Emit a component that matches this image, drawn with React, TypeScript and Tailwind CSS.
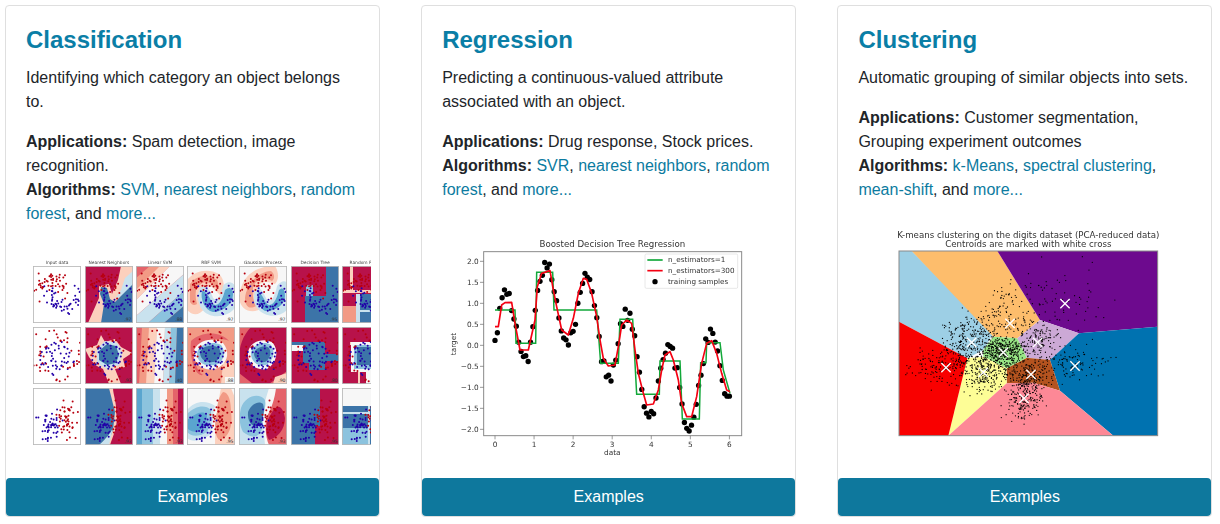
import React from "react";

// small seeded generator so the scatter plots stay the same on every load
const makeRandom = (seed: number) => () => {
  seed = (seed * 1664525 + 1013904223) % 4294967296;
  return seed / 4294967296;
};
const makeGauss = (rand: () => number) => () =>
  (rand() + rand() + rand() + rand() - 2) * 1.7;

const CRIMSON = "#b8124a";
const RED = "#e4636a";
const SALMON = "#f29a85";
const PINK = "#fcd0bd";
const WHITE = "#f7f7f7";
const PALE = "#c9e2ee";
const SKY = "#8cc3de";
const MID = "#5aa5cf";
const BLUE = "#3c74a8";

type Shape = [string, string];
type Panel = { bg: string; score?: string; shapes: Shape[] };

const rows: Panel[][] = [
  [
    { bg: "#ffffff", shapes: [] },
    {
      bg: CRIMSON,
      score: ".97",
      shapes: [
        [PINK, "M3,57 L14,32 L14,20 L24,18 L27,28 L33,14 L36,0 L48,0 L48,57Z"],
        [PALE, "M48,5 L40,12 L36,24 L30,33 L48,24Z"],
        [
          BLUE,
          "M48,18 L38,28 L30,36 L25,33 L22,22 L16,21 L15,28 L19,38 L16,57 L48,57Z",
        ],
      ],
    },
    {
      bg: RED,
      score: ".88",
      shapes: [
        [SALMON, "M14,0 L0,12 L0,30 L30,0Z"],
        [PINK, "M24,0 L0,24 L0,34 L34,0Z"],
        [WHITE, "M34,0 L0,34 L0,50 L48,8 L48,0Z"],
        [PALE, "M48,8 L0,50 L0,57 L12,57 L48,25Z"],
        [SKY, "M48,25 L12,57 L28,57 L48,40Z"],
        [BLUE, "M48,40 L28,57 L48,57Z"],
      ],
    },
    {
      bg: WHITE,
      score: ".97",
      shapes: [
        [
          PINK,
          "M0,44 L0,14 C8,4 22,2 32,8 C38,14 38,22 34,30 L28,24 C24,18 18,18 13,24 C10,30 12,36 18,42 C12,50 6,50 0,44Z",
        ],
        [
          SALMON,
          "M3,36 L3,18 C10,8 22,8 30,14 C32,18 31,22 30,23 C24,14 14,14 9,24 C8,30 9,34 10,38 C7,40 5,39 3,36Z",
        ],
        [
          PALE,
          "M13,22 C18,18 24,24 26,32 C30,36 34,30 36,20 C40,14 46,16 48,20 L48,42 C40,52 22,54 14,42 C10,34 10,28 13,22Z",
        ],
        [
          MID,
          "M15,25 C19,24 23,32 26,38 C32,42 36,32 38,24 C42,20 46,22 46,28 C46,38 36,46 26,46 C18,44 13,34 15,25Z",
        ],
      ],
    },
    {
      bg: WHITE,
      score: ".97",
      shapes: [
        [
          PINK,
          "M0,32 C2,10 16,0 36,0 C40,6 40,14 36,18 C28,14 20,16 18,22 C16,30 20,36 24,42 C14,48 2,46 0,32Z",
        ],
        [
          SALMON,
          "M6,32 C8,18 18,6 32,5 C36,8 36,13 33,15 C24,10 16,14 14,22 C13,30 15,36 17,40 C10,44 6,40 6,32Z",
        ],
        [
          PALE,
          "M17,24 C22,20 24,26 28,34 C32,38 36,30 38,20 C42,14 48,14 48,18 L48,44 C40,52 26,52 18,42 C14,36 14,28 17,24Z",
        ],
        [
          MID,
          "M19,26 C22,26 24,32 28,38 C34,42 38,32 40,24 C44,20 46,24 46,30 C46,40 34,46 26,45 C20,42 17,32 19,26Z",
        ],
      ],
    },
    {
      bg: CRIMSON,
      score: ".95",
      shapes: [
        [BLUE, "M35,0 H48 V57 H14 V30 H35Z"],
        [SKY, "M15,19 H22 V30 H15Z"],
      ],
    },
    {
      bg: CRIMSON,
      shapes: [
        [SALMON, "M0,40 H14 V57 H0Z"],
        [PINK, "M0,24 H48 V27 H0Z M8,0 H11 V24 H8Z"],
        [BLUE, "M16,28 H48 V57 H16Z"],
        [PALE, "M14,28 H18 V57 H14Z M16,44 H30 V46 H16Z"],
      ],
    },
  ],
  [
    { bg: "#ffffff", shapes: [] },
    {
      bg: CRIMSON,
      score: ".93",
      shapes: [
        [
          PINK,
          "M0,22 L12,18 L16,8 L20,15 L30,12 L36,20 L47,26 L38,32 L40,40 L30,42 L36,57 L24,57 L18,42 L10,38 L4,30Z",
        ],
        [PALE, "M12,22 L20,14 L32,16 L37,26 L34,38 L22,42 L12,36Z"],
        [BLUE, "M14,24 L22,17 L31,19 L34,28 L31,36 L22,38 L14,33Z"],
      ],
    },
    {
      bg: SALMON,
      score: ".40",
      shapes: [
        [RED, "M0,0 H6 L3,57 H0Z"],
        [PINK, "M13,0 H21 L18,57 H10Z"],
        [WHITE, "M21,0 H29 L27,57 H18Z"],
        [PALE, "M29,0 H35 L33,57 H27Z"],
        [SKY, "M35,0 H41 L39,57 H33Z"],
        [BLUE, "M41,0 H48 V57 H39Z"],
      ],
    },
    {
      bg: SALMON,
      score: ".88",
      shapes: [
        [RED, "M4,14 C14,4 34,4 42,14 C34,10 14,12 8,22 C6,34 10,44 16,48 C8,50 2,30 4,14Z"],
        [PINK, "M36,36 C42,34 48,36 48,40 V57 H34Z"],
        [WHITE, "M6,26 C10,12 26,10 36,16 C44,26 40,38 28,42 C18,44 8,40 6,26Z"],
        [
          SKY,
          "M10,26 C12,16 26,14 34,18 C40,26 36,36 28,38 C18,40 10,36 10,26Z",
        ],
        [BLUE, "M13,25 C16,18 26,17 32,21 C35,27 33,33 27,35 C18,36 13,32 13,25Z"],
        [WHITE, "M38,50 H48 V57 H38Z"],
      ],
    },
    {
      bg: CRIMSON,
      score: ".90",
      shapes: [
        [RED, "M0,0 H12 C4,8 0,20 0,30Z M0,46 L14,57 H0Z M30,57 L48,44 V57Z"],
        [PINK, "M36,50 L48,46 V57 H34Z"],
        [WHITE, "M9,26 C10,14 26,10 34,16 C40,24 38,36 28,42 C18,44 8,38 9,26Z"],
        [SKY, "M12,26 C14,16 26,14 32,18 C37,25 34,34 27,38 C20,40 12,36 12,26Z"],
        [BLUE, "M15,26 C17,20 26,18 30,21 C33,26 31,32 26,35 C20,36 15,32 15,26Z"],
      ],
    },
    {
      bg: CRIMSON,
      score: ".80",
      shapes: [
        [BLUE, "M12,15 H34 V43 H18 V36 H12Z M34,27 H48 V34 H34Z M0,15 H12 V18 H0Z"],
        [WHITE, "M0,18 H12 V24 H0Z"],
      ],
    },
    {
      bg: CRIMSON,
      shapes: [
        [PINK, "M8,15 H48 V18 H8Z M16,40 V57 H18 V40Z"],
        [WHITE, "M9,15 H48 V57 H24 V45 H9Z"],
        [SKY, "M12,18 H48 V42 H12Z"],
        [BLUE, "M15,20 H48 V38 H15Z"],
      ],
    },
  ],
  [
    { bg: "#ffffff", shapes: [] },
    {
      bg: BLUE,
      score: ".93",
      shapes: [
        [
          PINK,
          "M24,0 H48 V57 H22 L28,42 L30,24 Z",
        ],
        [PALE, "M14,57 C22,50 26,44 28,40 L24,57Z"],
        [CRIMSON, "M28,0 H48 V57 H25 C28,48 34,36 31,24 C32,16 28,6 28,0Z"],
      ],
    },
    {
      bg: MID,
      score: ".93",
      shapes: [
        [SKY, "M6,0 H17 V57 H6Z"],
        [PALE, "M17,0 H24 V57 H17Z"],
        [WHITE, "M24,0 H31 V57 H24Z"],
        [SALMON, "M31,0 H37 V57 H31Z"],
        [RED, "M37,0 H42 V57 H37Z"],
        [CRIMSON, "M42,0 H48 V57 H42Z"],
      ],
    },
    {
      bg: WHITE,
      score: ".95",
      shapes: [
        [PINK, "M34,0 H44 L48,10 V57 H28 C28,40 30,18 34,0Z"],
        [SALMON, "M36,4 C42,4 44,14 44,24 C46,38 42,50 32,52 C26,46 28,30 30,24 C30,16 32,8 36,4Z"],
        [PALE, "M0,22 C8,12 20,12 28,18 C26,24 26,34 24,46 C14,54 4,54 0,50Z"],
        [SKY, "M0,26 C8,18 18,16 24,22 C24,32 22,40 20,44 C10,50 4,48 0,44Z"],
        [MID, "M0,32 C8,26 14,22 20,26 C20,34 18,38 14,42 C6,46 2,42 0,40Z"],
      ],
    },
    {
      bg: WHITE,
      score: ".93",
      shapes: [
        [PALE, "M0,0 H30 C26,14 22,24 24,36 L26,57 H0Z"],
        [SKY, "M2,20 C6,8 20,4 26,12 C28,20 22,28 24,38 C20,52 12,50 4,44 C0,36 0,28 2,20Z"],
        [BLUE, "M9,24 C12,16 20,12 24,16 C26,22 24,30 22,36 C16,42 8,36 9,24Z"],
        [RED, "M37,0 H48 V57 H30 C26,48 26,36 28,28 C32,22 36,10 37,0Z"],
        [CRIMSON, "M32,26 C38,14 44,18 46,30 C46,42 38,50 30,52 C26,46 26,34 32,26Z"],
      ],
    },
    {
      bg: BLUE,
      score: ".95",
      shapes: [[CRIMSON, "M29,0 H48 V57 H24 V38 H29Z"]],
    },
    {
      bg: BLUE,
      shapes: [
        [WHITE, "M0,0 H48 V18 H0Z"],
        [SKY, "M0,40 H26 V57 H0Z"],
        [PALE, "M0,24 H28 V26 H0Z M26,18 H28 V57 H26Z"],
      ],
    },
  ],
];

const TITLES = [
  "Input data",
  "Nearest Neighbors",
  "Linear SVM",
  "RBF SVM",
  "Gaussian Process",
  "Decision Tree",
  "Random Forest",
];
const COLUMN_X = [33, 85, 136, 187, 239, 291, 342];
const ROW_Y = [266, 327, 388];

// one scatter per row: moons, circles, linearly separable blobs
const makeDots = () => {
  const rand = makeRandom(41);
  const gauss = makeGauss(rand);
  const moons: [number, number, number][] = [];
  const circles: [number, number, number][] = [];
  const blobs: [number, number, number][] = [];
  for (let i = 0; i < 100; i++) {
    const c = i % 2;
    const t = rand() * Math.PI;
    const mx = c ? 1 - Math.cos(t) : Math.cos(t);
    const my = c ? 0.5 - Math.sin(t) : Math.sin(t);
    moons.push([(mx + 1.25) * 14 + gauss() * 3.5, 32 - my * 21 + gauss() * 4, c]);
    const a = rand() * Math.PI * 2;
    const r = c ? 10 : 19;
    circles.push([
      23 + Math.cos(a) * r + gauss() * 4,
      29 + Math.sin(a) * r * 1.1 + gauss() * 4,
      c,
    ]);
    blobs.push(
      c
        ? [17 + gauss() * 6, 38 + gauss() * 7, 1]
        : [33 + gauss() * 5, 33 + gauss() * 10, 0],
    );
  }
  return [moons, circles, blobs];
};
const dots = makeDots();

const ClassifierGrid = () => (
  <svg
    width={341}
    height={192}
    viewBox="30 258 341 192"
    className="block ml-[24px] mt-[32px] blur-[0.5px] font-['DejaVu_Sans',sans-serif]"
  >
    {TITLES.map((title, c) => (
      <text
        key={title}
        x={COLUMN_X[c] + 24}
        y={264}
        fontSize={4.4}
        fill="#444"
        textAnchor="middle"
      >
        {title}
      </text>
    ))}
    {rows.map((row, r) =>
      row.map((panel, c) => (
        <svg
          key={`${r}-${c}`}
          x={COLUMN_X[c]}
          y={ROW_Y[r]}
          width={48}
          height={57}
          viewBox="0 0 48 57"
        >
          <rect width={48} height={57} fill={panel.bg} />
          {panel.shapes.map(([fill, d], i) => (
            <path key={i} d={d} fill={fill} />
          ))}
          {dots[r].map(([x, y, k], i) => (
            <circle
              key={i}
              cx={x}
              cy={y}
              r={1}
              fill={k ? "#2200a8" : "#b8000f"}
            />
          ))}
          {panel.score && (
            <text x={46.5} y={54.5} fontSize={4.6} fill="#333" textAnchor="end">
              {panel.score}
            </text>
          )}
          <rect
            x={0.4}
            y={0.4}
            width={47.2}
            height={56.2}
            fill="none"
            stroke="#b9b9b9"
            strokeWidth={0.9}
          />
        </svg>
      )),
    )}
  </svg>
);

const RED_LINE =
  "165,290 175,290 185,225 195,218 215,217 225,280 240,360 265,360 285,270 292,170 305,130 330,122 340,180 350,230 365,300 385,315 400,265 415,190 430,145 440,148 455,190 470,260 480,330 490,385 505,408 525,405 535,350 545,285 560,270 575,280 585,360 595,430 610,490 620,525 640,522 655,480 665,420 675,375 690,365 700,390 715,450 725,520 740,560 755,560 770,500 785,400 800,340 815,332 830,370 845,430 860,480 870,485";
const GREEN_LINE =
  "165,240 225,240 228,340 287,340 290,127 338,127 342,240 470,240 482,400 535,400 540,268 578,268 590,493 658,493 660,393 720,393 727,567 778,567 782,398 798,398 800,338 840,338 850,420 870,490";

const makeSamples = () => {
  const rand = makeRandom(7);
  const gauss = makeGauss(rand);
  const points: [number, number][] = [];
  for (let i = 0; i < 100; i++) {
    const x = (i * 6) / 99;
    const y = Math.sin(x) + Math.sin(6 * x) + gauss() * 0.1;
    points.push([165 + x * 117.2, 346 - y * 126]);
  }
  return points;
};
const samples = makeSamples();

const RegressionChart = () => (
  <svg
    width={310}
    height={235}
    viewBox="0 0 930 705"
    className="block ml-[18px] mt-[28px] blur-[0.4px] font-['DejaVu_Sans',sans-serif]"
  >
    <text x={517} y={50} fontSize={26} fill="#333" textAnchor="middle">
      Boosted Decision Tree Regression
    </text>
    <rect
      x={131}
      y={65}
      width={774}
      height={552}
      fill="#fff"
      stroke="#8a8a8a"
      strokeWidth={3}
    />
    {[2, 1.5, 1, 0.5, 0, -0.5, -1, -1.5, -2].map((v) => {
      const y = 346 - v * 126;
      return (
        <g key={v}>
          <line x1={120} x2={131} y1={y} y2={y} stroke="#666" strokeWidth={2} />
          <text x={116} y={y + 7} fontSize={22} fill="#333" textAnchor="end">
            {v < 0 ? `\u2212${(-v).toFixed(1)}` : v.toFixed(1)}
          </text>
        </g>
      );
    })}
    {[0, 1, 2, 3, 4, 5, 6].map((v) => {
      const x = 165 + v * 117.2;
      return (
        <g key={v}>
          <line x1={x} x2={x} y1={617} y2={628} stroke="#666" strokeWidth={2} />
          <text x={x} y={650} fontSize={22} fill="#333" textAnchor="middle">
            {v}
          </text>
        </g>
      );
    })}
    <text x={517} y={676} fontSize={22} fill="#333" textAnchor="middle">
      data
    </text>
    <text
      transform="translate(47 342) rotate(-90)"
      fontSize={22}
      fill="#333"
      textAnchor="middle"
    >
      target
    </text>
    {samples.map(([x, y], i) => (
      <circle key={i} cx={x} cy={y} r={8} fill="#000" />
    ))}
    <polyline
      points={GREEN_LINE}
      fill="none"
      stroke="#12a83a"
      strokeWidth={4.5}
    />
    <polyline
      points={RED_LINE}
      fill="none"
      stroke="#f40012"
      strokeWidth={5}
      strokeLinejoin="round"
    />
    <rect
      x={615}
      y={72}
      width={278}
      height={103}
      rx={4}
      fill="#fff"
      fillOpacity={0.85}
      stroke="#ddd"
      strokeWidth={2}
    />
    <line x1={622} x2={668} y1={90} y2={90} stroke="#12a83a" strokeWidth={5} />
    <line x1={622} x2={668} y1={122} y2={122} stroke="#f40012" strokeWidth={5} />
    <circle cx={645} cy={155} r={8} fill="#000" />
    <text x={684} y={97} fontSize={21.7} fill="#333">
      n_estimators=1
    </text>
    <text x={684} y={129} fontSize={21.7} fill="#333">
      n_estimators=300
    </text>
    <text x={684} y={161} fontSize={21.7} fill="#333">
      training samples
    </text>
  </svg>
);

const REGIONS: [string, string][] = [
  ["#9dcfe5", "57,78 95,78 340,325 310,375 262,400 57,290"],
  ["#fdbd6c", "95,78 352,78 480,285 412,340 340,335"],
  ["#6d0a8e", "352,78 833,78 833,305 597,325 480,285"],
  ["#cca9d6", "480,285 597,325 510,405 440,398 412,340"],
  ["#0072b0", "597,325 833,305 833,632 700,632 540,497 510,405"],
  ["#b4531f", "440,398 510,405 540,497 460,473 380,475 380,430"],
  ["#98e585", "340,335 412,340 440,398 380,430 310,395 310,375"],
  ["#fdfd96", "262,400 310,395 380,430 380,475 205,632"],
  ["#f90000", "57,290 262,400 205,632 57,632"],
  ["#fd8896", "380,475 460,473 540,497 700,632 205,632"],
];

// centre and spread of the point cloud of each cluster, then its white cross
const CLUSTERS: [number, number, number, number, number, number, number][] = [
  [555, 220, 75, 65, 60, 555, 236],
  [385, 280, 50, 48, 140, 390, 295],
  [473, 350, 36, 28, 150, 473, 352],
  [275, 345, 50, 34, 260, 275, 352],
  [368, 382, 32, 22, 320, 370, 382],
  [198, 420, 55, 28, 160, 198, 428],
  [315, 440, 38, 30, 260, 310, 442],
  [585, 420, 50, 28, 100, 585, 423],
  [453, 450, 32, 24, 170, 453, 448],
  [432, 520, 28, 32, 190, 432, 520],
];

const makeSpecks = () => {
  const rand = makeRandom(1234);
  const gauss = makeGauss(rand);
  const specks: [number, number][] = [];
  CLUSTERS.forEach(([cx, cy, sx, sy, n]) => {
    for (let i = 0; i < n; i++) {
      const x = cx + gauss() * sx;
      const y = cy + gauss() * sy;
      if (x > 70 && x < 820 && y > 90 && y < 620) specks.push([x, y]);
    }
  });
  return specks;
};
const specks = makeSpecks();

const ClusterChart = () => (
  <svg
    width={295}
    height={220}
    viewBox="0 0 885 660"
    className="block ml-[42px] mt-[23px] blur-[0.4px] font-['DejaVu_Sans',sans-serif]"
  >
    <text x={445} y={39} fontSize={26} fill="#333" textAnchor="middle">
      K-means clustering on the digits dataset (PCA-reduced data)
    </text>
    <text x={445} y={66} fontSize={26} fill="#333" textAnchor="middle">
      Centroids are marked with white cross
    </text>
    {REGIONS.map(([fill, points]) => (
      <polygon key={fill} points={points} fill={fill} />
    ))}
    {specks.map(([x, y], i) => (
      <circle key={i} cx={x} cy={y} r={1.9} fill="#000" />
    ))}
    {CLUSTERS.map(([, , , , , a, b], i) => (
      <path
        key={i}
        d={`M${a - 14},${b - 14} L${a + 14},${b + 14} M${a - 14},${b + 14} L${a + 14},${b - 14}`}
        stroke="#fff"
        strokeWidth={4}
      />
    ))}
    <rect
      x={57}
      y={78}
      width={776}
      height={554}
      fill="none"
      stroke="#8a8a8a"
      strokeWidth={3}
    />
  </svg>
);

const A = ({ children }: { children: React.ReactNode }) => (
  <a href="#" className="text-[#0c7ba0]">
    {children}
  </a>
);

const Card = ({
  title,
  description,
  body,
  chart,
}: {
  title: string;
  description: string;
  body: React.ReactNode;
  chart: React.ReactNode;
}) => (
  <div className="w-[375px] h-[512px] flex flex-col border border-[#dfdfdf] rounded-[4px] bg-white">
    <div className="px-5 pt-5">
      <h2 className="text-2xl leading-[27px] font-bold text-[#0a7ea6] mb-[13px]">
        {title}
      </h2>
      <p className="mb-4">{description}</p>
      <p>{body}</p>
    </div>
    {chart}
    <a
      href="#"
      className="mt-auto h-[38px] flex items-center justify-center rounded-[4px] bg-[#0e789d] text-white"
    >
      Examples
    </a>
  </div>
);

export default function App() {
  return (
    <div className="w-[1220px] h-[524px] bg-white pt-[5px] pl-[5px] flex gap-[41.2px] text-base leading-6 text-[#212529] font-['Liberation_Sans',Arial,sans-serif]">
      <Card
        title="Classification"
        description="Identifying which category an object belongs to."
        body={
          <>
            <strong>Applications:</strong> Spam detection, image recognition.
            <br />
            <strong>Algorithms:</strong> <A>SVM</A>, <A>nearest neighbors</A>,{" "}
            <A>random forest</A>, and <A>more...</A>
          </>
        }
        chart={<ClassifierGrid />}
      />
      <Card
        title="Regression"
        description="Predicting a continuous-valued attribute associated with an object."
        body={
          <>
            <strong>Applications:</strong> Drug response, Stock prices.
            <br />
            <strong>Algorithms:</strong> <A>SVR</A>, <A>nearest neighbors</A>,{" "}
            <A>random forest</A>, and <A>more...</A>
          </>
        }
        chart={<RegressionChart />}
      />
      <Card
        title="Clustering"
        description="Automatic grouping of similar objects into sets."
        body={
          <>
            <strong>Applications:</strong> Customer segmentation, Grouping
            experiment outcomes
            <br />
            <strong>Algorithms:</strong> <A>k-Means</A>,{" "}
            <A>spectral clustering</A>, <A>mean-shift</A>, and <A>more...</A>
          </>
        }
        chart={<ClusterChart />}
      />
    </div>
  );
}
